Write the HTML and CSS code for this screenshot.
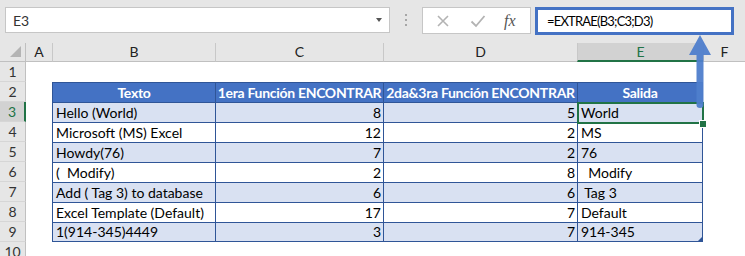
FILE: index.html
```html
<!DOCTYPE html>
<html>
<head>
<meta charset="utf-8">
<link rel="stylesheet" href="styles.css">
</head>
<body>
<div class="app">
  <div class="toolbar">
    <div class="namebox">
      <span class="name">E3</span>
      <span class="caret"></span>
    </div>
    <div class="dots"><i></i><i></i><i></i></div>
    <div class="btnbox">
      <svg class="ico" width="14" height="14" viewBox="0 0 14 14"><path d="M2 2L12 12M12 2L2 12" stroke="#b3b3b3" stroke-width="1.6" fill="none"/></svg>
      <svg class="ico" width="16" height="14" viewBox="0 0 16 14"><path d="M1.5 7.5L6 12L14.5 2" stroke="#b3b3b3" stroke-width="1.8" fill="none"/></svg>
      <span class="fx">fx</span>
    </div>
    <div class="formula">=EXTRAE(B3;C3;D3)</div>
  </div>
  <div class="sheet">
    <div class="ch corner"><span class="tri"></span></div>
    <div class="ch first">A</div>
    <div class="ch">B</div>
    <div class="ch">C</div>
    <div class="ch">D</div>
    <div class="ch sel">E</div>
    <div class="ch">F</div>

    <div class="rh">1</div><div class="c"></div><div class="c"></div><div class="c"></div><div class="c"></div><div class="c"></div><div class="c"></div>

    <div class="rh">2</div><div class="c"></div>
    <div class="t th">Texto</div><div class="t th">1era Función ENCONTRAR</div><div class="t th">2da&amp;3ra Función ENCONTRAR</div><div class="t th last">Salida</div><div class="c"></div>

    <div class="rh rsel">3</div><div class="c"></div>
    <div class="t band">Hello (World)</div><div class="t band num">8</div><div class="t band num">5</div><div class="t band last active">World<span class="selbox"></span><span class="handle"></span></div><div class="c"></div>

    <div class="rh">4</div><div class="c"></div>
    <div class="t">Microsoft (MS) Excel</div><div class="t num">12</div><div class="t num">2</div><div class="t last">MS</div><div class="c"></div>

    <div class="rh">5</div><div class="c"></div>
    <div class="t band">Howdy(76)</div><div class="t band num">7</div><div class="t band num">2</div><div class="t band last">76</div><div class="c"></div>

    <div class="rh">6</div><div class="c"></div>
    <div class="t">(&nbsp; Modify)</div><div class="t num">2</div><div class="t num">8</div><div class="t last">&nbsp; Modify</div><div class="c"></div>

    <div class="rh">7</div><div class="c"></div>
    <div class="t band">Add ( Tag 3) to database</div><div class="t band num">6</div><div class="t band num">6</div><div class="t band last">&nbsp;Tag 3</div><div class="c"></div>

    <div class="rh">8</div><div class="c"></div>
    <div class="t">Excel Template (Default)</div><div class="t num">17</div><div class="t num">7</div><div class="t last">Default</div><div class="c"></div>

    <div class="rh">9</div><div class="c"></div>
    <div class="t band bottom">1(914-345)4449</div><div class="t band bottom num">3</div><div class="t band bottom num">7</div><div class="t band bottom last corner-cell">914-345<span class="resize"></span></div><div class="c"></div>

    <div class="rh">10</div><div class="c"></div><div class="c"></div><div class="c"></div><div class="c"></div><div class="c"></div><div class="c"></div>
  </div>
  <svg class="arrow" width="25" height="76" viewBox="0 0 25 76">
    <path d="M12 1L23 21H15.5V71Q15.5 74 12 74Q8.5 74 8.5 71V21H1Z" fill="#4f7ecc" fill-opacity="0.95"/>
  </svg>
</div>
</body>
</html>
```

FILE: styles.css
```css
* { box-sizing: border-box; }
html, body { margin: 0; padding: 0; background: #fff; overflow: hidden; }
body { font-family: "Lato", "Liberation Sans", sans-serif; font-size: 14px; color: #000; }

.app { position: relative; width: 745px; height: 256px; display: flex; flex-direction: column; overflow: hidden; }

.toolbar {
  flex: 0 0 43px;
  height: 43px;
  background: #e6e6e6;
  display: flex;
  align-items: flex-start;
  padding: 7px 0 0 5px;
}
.namebox {
  width: 385px; height: 26px;
  background: #fff;
  border: 1px solid #c6c6c6;
  display: flex; align-items: center; justify-content: space-between;
  padding: 0 7px 0 7px;
}
.name { font-size: 14px; color: #333; }
.caret { width: 0; height: 0; border-left: 3.5px solid transparent; border-right: 3.5px solid transparent; border-top: 4px solid #555; }
.dots { width: 32px; height: 26px; display: flex; flex-direction: column; align-items: center; justify-content: center; gap: 3px; }
.dots i { display: block; width: 2px; height: 2px; background: #a6a6a6; }
.btnbox {
  width: 109px; height: 27px;
  background: #fff;
  border: 1px solid #c6c6c6;
  display: flex; align-items: center;
  padding-left: 13px; gap: 20px;
}
.fx { font-family: "Liberation Serif", serif; font-style: italic; font-size: 16px; color: #555; margin-left: -2px; }
.formula {
  margin-left: 4px;
  width: 199px; height: 28px;
  background: #fff;
  border: 3px solid #4472c4;
  padding-left: 9px;
  line-height: 22px;
  font-size: 13px;
  letter-spacing: -0.8px;
}

.sheet {
  flex: 0 0 auto;
  display: grid;
  grid-template-columns: 26px 26px 163px 168px 194px 126px 1fr;
  grid-template-rows: 19px repeat(10, 20px);
  font-size: 14px;
}
.ch {
  background: #e6e6e6;
  border-left: 1px solid #c8c8c8;
  border-bottom: 1px solid #c0c0c0;
  text-align: center;
  line-height: 18px;
  font-size: 14px;
  color: #222;
}
.ch.first { border-left: none; }
.ch.corner { border-left: none; border-right: 1px solid #c0c0c0; position: relative; }
.tri { position: absolute; right: 4px; bottom: 4px; width: 0; height: 0; border-left: 11px solid transparent; border-bottom: 11px solid #b4b4b4; }
.ch.sel { background: #d2d2d2; color: #217346; border-bottom: 2px solid #217346; }

.rh {
  background: #e6e6e6;
  border-right: 1px solid #c0c0c0;
  border-bottom: 1px solid #d6d6d6;
  text-align: center;
  line-height: 19px;
  font-size: 14px;
  color: #333;
}
.rh.rsel { background: #d2d2d2; color: #217346; border-right: 2px solid #217346; }
.c { background: #fff; }

.t {
  border-left: 1px solid #2f5597;
  border-top: 1px solid #2f5597;
  padding: 0 3px;
  line-height: 19px;
  white-space: pre;
  overflow: hidden;
  background: #fff;
}
.t.last { border-right: 1px solid #2f5597; }
.t.bottom { border-bottom: 1px solid #2f5597; line-height: 18px; }
.t.band { background: #d9e1f2; }
.t.num { text-align: right; padding-right: 2px; }
.t.th { background: #4472c4; color: #fff; font-weight: 700; text-align: center; padding: 0; letter-spacing: -0.3px; }

.active { position: relative; overflow: visible; }
.selbox { position: absolute; left: -1px; top: -1px; right: -2px; bottom: -2px; border: 2px solid #217346; pointer-events: none; }
.handle { position: absolute; right: -4px; bottom: -5px; width: 6px; height: 6px; background: #217346; border: 1px solid #fff; box-sizing: content-box; margin: -1px; }
.corner-cell { position: relative; overflow: visible; }
.resize { position: absolute; right: 0; bottom: 0; width: 0; height: 0; border-left: 4px solid transparent; border-bottom: 4px solid #2f5597; }

.arrow { position: absolute; left: 688px; top: 34px; }
```
